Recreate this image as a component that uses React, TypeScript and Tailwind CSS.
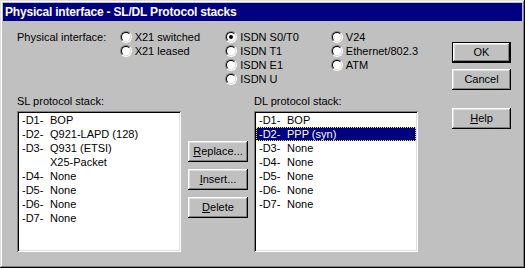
import React from 'react'

const raised =
  'shadow-[inset_-1px_-1px_#000,inset_1px_1px_#fff,inset_-2px_-2px_#808080,inset_2px_2px_#dfdfdf]'
const sunken =
  'shadow-[inset_1px_1px_#808080,inset_-1px_-1px_#fff,inset_2px_2px_#000,inset_-2px_-2px_#dfdfdf]'

const Radio = ({ label, checked }: { label: string; checked?: boolean }) => (
  <div className="flex h-[14px] items-center gap-[3px]">
    <div className="flex h-[12px] w-[12px] items-center justify-center rounded-full border border-t-[#808080] border-l-[#808080] border-b-white border-r-white">
      <div className="flex h-[10px] w-[10px] items-center justify-center rounded-full border border-t-black border-l-black border-b-[#dfdfdf] border-r-[#dfdfdf] bg-white">
        {checked && <div className="h-[4px] w-[4px] rounded-full bg-black" />}
      </div>
    </div>
    <span className="leading-[14px]">{label}</span>
  </div>
)

const Button = ({ children, isDefault }: { children: React.ReactNode; isDefault?: boolean }) =>
  isDefault ? (
    <div className="h-[21px] w-[59px] border border-black">
      <div className={`flex h-full w-full items-center justify-center ${raised}`}>{children}</div>
    </div>
  ) : (
    <div className={`flex h-[21px] items-center justify-center ${raised}`}>{children}</div>
  )

type Item = { tag: string; name: string; selected?: boolean }

const ListBox = ({ items }: { items: Item[] }) => (
  <div className={`h-[141px] w-[164px] bg-white p-[2px] ${sunken}`}>
    {items.map((it, i) => (
      <div
        key={i}
        className={
          it.selected
            ? 'flex h-[14px] items-center bg-[#000080] pl-[3px] text-white outline-1 outline-dotted outline-[#ffff00] -outline-offset-1'
            : 'flex h-[14px] items-center pl-[3px]'
        }
      >
        <span className="w-[28px]">{it.tag}</span>
        <span>{it.name}</span>
      </div>
    ))}
  </div>
)

const slItems: Item[] = [
  { tag: '-D1-', name: 'BOP' },
  { tag: '-D2-', name: 'Q921-LAPD (128)' },
  { tag: '-D3-', name: 'Q931 (ETSI)' },
  { tag: '', name: 'X25-Packet' },
  { tag: '-D4-', name: 'None' },
  { tag: '-D5-', name: 'None' },
  { tag: '-D6-', name: 'None' },
  { tag: '-D7-', name: 'None' },
]

const dlItems: Item[] = [
  { tag: '-D1-', name: 'BOP' },
  { tag: '-D2-', name: 'PPP (syn)', selected: true },
  { tag: '-D3-', name: 'None' },
  { tag: '-D4-', name: 'None' },
  { tag: '-D5-', name: 'None' },
  { tag: '-D6-', name: 'None' },
  { tag: '-D7-', name: 'None' },
]

export default function App() {
  return (
    <div
      className="flex h-[268px] w-[525px] flex-col bg-[#c0c0c0] p-[3px] text-[11px] text-black shadow-[inset_-1px_-1px_#000,inset_1px_1px_#dfdfdf,inset_-2px_-2px_#808080,inset_2px_2px_#fff]"
      style={{ fontFamily: '"Liberation Sans", Arial, sans-serif' }}
    >
      <div className="flex h-[18px] items-center bg-[#000080] pl-[2px] text-[12px] font-bold tracking-[-0.2px] text-white">
        Physical interface - SL/DL Protocol stacks
      </div>

      <div className="flex flex-1 pl-[14px]">
        {/* main area */}
        <div className="flex w-[401px] flex-col pt-[9px]">
          <div className="flex">
            <div className="w-[105px] leading-[14px]">Physical interface:</div>
            <div className="flex w-[108px] flex-col">
              <Radio label="X21 switched" />
              <Radio label="X21 leased" />
            </div>
            <div className="flex w-[108px] flex-col">
              <Radio label="ISDN S0/T0" checked />
              <Radio label="ISDN T1" />
              <Radio label="ISDN E1" />
              <Radio label="ISDN U" />
            </div>
            <div className="flex flex-col">
              <Radio label="V24" />
              <Radio label="Ethernet/802.3" />
              <Radio label="ATM" />
            </div>
          </div>

          <div className="mt-[9px] flex">
            <div className="flex flex-col">
              <div className="mb-[3px] h-[13px] leading-[13px]">SL protocol stack:</div>
              <ListBox items={slItems} />
            </div>
            <div className="ml-[7px] flex w-[60px] flex-col gap-[7px] pt-[46px]">
              <Button>
                <span>
                  <u>R</u>eplace...
                </span>
              </Button>
              <Button>
                <span>
                  <u>I</u>nsert...
                </span>
              </Button>
              <Button>
                <span>
                  <u>D</u>elete
                </span>
              </Button>
            </div>
            <div className="ml-[6px] flex flex-col">
              <div className="mb-[3px] h-[13px] leading-[13px]">DL protocol stack:</div>
              <ListBox items={dlItems} />
            </div>
          </div>
        </div>

        {/* right buttons */}
        <div className="ml-[34px] flex w-[59px] flex-col pt-[21px]">
          <Button isDefault>OK</Button>
          <div className="mt-[6px]">
            <Button>Cancel</Button>
          </div>
          <div className="mt-[18px]">
            <Button>
              <span>
                <u>H</u>elp
              </span>
            </Button>
          </div>
        </div>
      </div>
    </div>
  )
}
